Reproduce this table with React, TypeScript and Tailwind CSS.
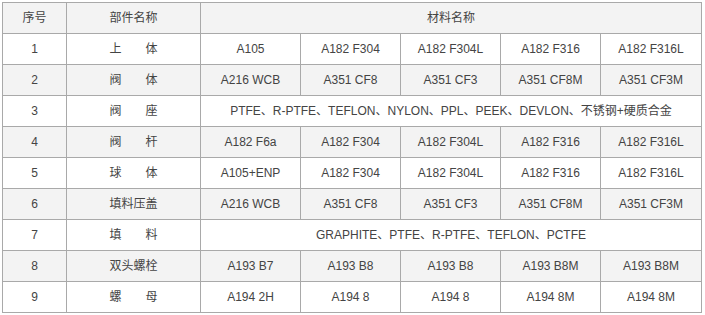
const materials: string[] = ['A105', 'A182 F304', 'A182 F304L', 'A182 F316', 'A182 F316L'];

type Row = { no: string; part: string; mats: string[] | string };

const rows: Row[] = [
  { no: '1', part: '上\u3000\u3000体', mats: materials },
  { no: '2', part: '阀\u3000\u3000体', mats: ['A216 WCB', 'A351 CF8', 'A351 CF3', 'A351 CF8M', 'A351 CF3M'] },
  { no: '3', part: '阀\u3000\u3000座', mats: 'PTFE、R-PTFE、TEFLON、NYLON、PPL、PEEK、DEVLON、不锈钢+硬质合金' },
  { no: '4', part: '阀\u3000\u3000杆', mats: ['A182 F6a', 'A182 F304', 'A182 F304L', 'A182 F316', 'A182 F316L'] },
  { no: '5', part: '球\u3000\u3000体', mats: ['A105+ENP', 'A182 F304', 'A182 F304L', 'A182 F316', 'A182 F316L'] },
  { no: '6', part: '填料压盖', mats: ['A216 WCB', 'A351 CF8', 'A351 CF3', 'A351 CF8M', 'A351 CF3M'] },
  { no: '7', part: '填\u3000\u3000料', mats: 'GRAPHITE、PTFE、R-PTFE、TEFLON、PCTFE' },
  { no: '8', part: '双头螺栓', mats: ['A193 B7', 'A193 B8', 'A193 B8', 'A193 B8M', 'A193 B8M'] },
  { no: '9', part: '螺\u3000\u3000母', mats: ['A194 2H', 'A194 8', 'A194 8', 'A194 8M', 'A194 8M'] },
];

function Cell({ children, gray, wide }: { children: React.ReactNode; gray: boolean; wide?: boolean }) {
  return (
    <div
      className={`flex items-center justify-center h-[30px] whitespace-pre ${gray ? 'bg-[#f3f3f3]' : 'bg-white'} ${wide ? 'col-span-5' : ''}`}
    >
      {children}
    </div>
  );
}

export default function App() {
  return (
    <div className="w-[705px] h-[315px] bg-white pt-[2px] pl-[2px]">
      <div
        className="grid w-[700px] grid-cols-[63px_133px_99px_99px_99px_99px_100px] gap-px bg-[#a9a9a9] p-px text-[12px] text-[#444]"
        style={{ fontFamily: '"Liberation Sans", Arial, "Noto Sans CJK SC", sans-serif' }}
      >
        <Cell gray>序号</Cell>
        <Cell gray>部件名称</Cell>
        <Cell gray wide>材料名称</Cell>
        {rows.map((r, i) => {
          const gray = i % 2 === 1;
          return (
            <div key={r.no} className="contents">
              <Cell gray={gray}>{r.no}</Cell>
              <Cell gray={gray}>{r.part}</Cell>
              {typeof r.mats === 'string' ? (
                <Cell gray={gray} wide>{r.mats}</Cell>
              ) : (
                r.mats.map((m, j) => (
                  <Cell key={j} gray={gray}>{m}</Cell>
                ))
              )}
            </div>
          );
        })}
      </div>
    </div>
  );
}
